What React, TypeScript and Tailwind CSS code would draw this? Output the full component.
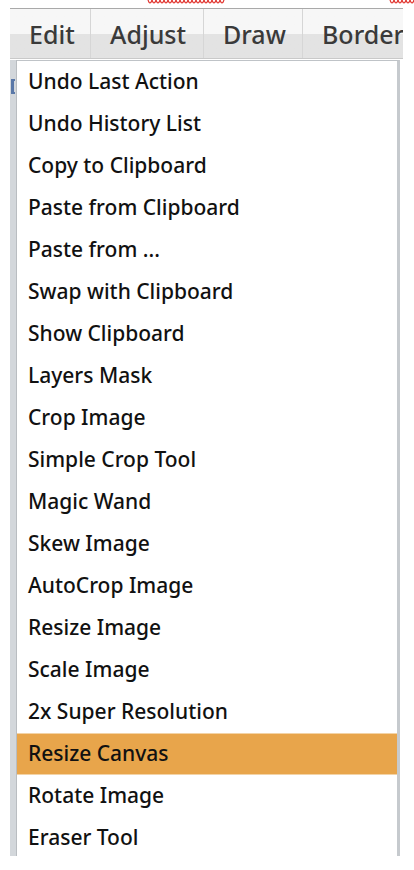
import React from "react";

const items = [
    "Undo Last Action",
    "Undo History List",
    "Copy to Clipboard",
    "Paste from Clipboard",
    "Paste from ...",
    "Swap with Clipboard",
    "Show Clipboard",
    "Layers Mask",
    "Crop Image",
    "Simple Crop Tool",
    "Magic Wand",
    "Skew Image",
    "AutoCrop Image",
    "Resize Image",
    "Scale Image",
    "2x Super Resolution",
    "Resize Canvas",
    "Rotate Image",
    "Eraser Tool",
];

const menus = [
    { label: "Edit", w: "w-[81px]" },
    { label: "Adjust", w: "w-[113px]" },
    { label: "Draw", w: "w-[99px]" },
    { label: "Border", w: "flex-1" },
];

function Squiggle({ from, to }: { from: number; to: number }) {
    const pts: string[] = [];
    for (let x = from; x < to; x += 4) {
        pts.push(`M${x} 0 q1 3 2 3 q1 0 2 -3`);
    }
    return <path d={pts.join(" ")} stroke="#e0302a" strokeWidth="1.2" fill="none" />;
}

export default function App() {
    return (
        <div className="w-[414px] h-[870px] bg-white overflow-hidden font-['Noto_Sans',sans-serif]">
            <svg width="414" height="8" className="block">
                <Squiggle from={148} to={222} />
                <Squiggle from={390} to={414} />
            </svg>
            <div className="ml-[10px] w-[393px]">
                <div className="flex h-[51px] pt-[3px] border-t border-[#a9a9a9] bg-gradient-to-b from-[#f7f7f7] from-50% to-[#e3e3e3] to-50% text-[25px] font-medium text-[#3a3a3a] border-b border-b-[#c9c9c9]">
                    {menus.map((m, i) => (
                        <div
                            key={m.label}
                            className={`${m.w} -mt-[3px] pt-[3px] flex items-center pl-[19px] whitespace-nowrap overflow-hidden ${i < menus.length - 1 ? "border-r border-[#d6d6d6]" : ""}`}
                        >
                            {m.label}
                        </div>
                    ))}
                </div>
                <div className="flex h-[796px] mt-[1px] overflow-hidden">
                    <div className="w-[7px] bg-[#d3d7db] border-r border-[#b9bdc1] relative">
                        <div className="absolute left-[1px] top-[19px] w-[4px] h-[15px] border-l-[3px] border-y-2 border-[#5a78a8]" />
                    </div>
                    <div className="w-[383px] border-t border-[#bfc3c7] border-r-[3px] border-r-[#c6cace] bg-white text-[21px] font-medium text-[#111]">
                        {items.map((t) => (
                            <div
                                key={t}
                                className={`h-[42px] flex items-center pl-[11px] whitespace-nowrap ${t === "Resize Canvas" ? "bg-[#e8a54b] border-y border-[#f3d3a6]" : ""}`}
                            >
                                {t}
                            </div>
                        ))}
                    </div>
                </div>
            </div>
        </div>
    );
}
